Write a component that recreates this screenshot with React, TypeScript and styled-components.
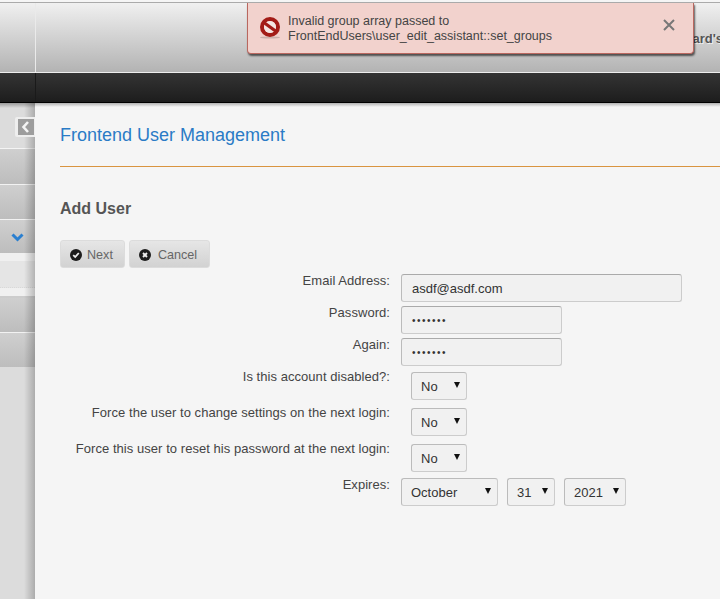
import styled, { createGlobalStyle } from "styled-components";

const GlobalStyles = createGlobalStyle`
  html, body {
    margin: 0;
    padding: 0;
    height: 100%;
    overflow: hidden;
    background: #f5f5f5;
    font-family: "Liberation Sans", Arial, sans-serif;
  }
  * {
    box-sizing: border-box;
  }
`;

const Page = styled.div`
  position: relative;
  width: 100%;
  height: 100vh;
  display: flex;
  flex-direction: column;
  overflow: hidden;
`;

const TopBar = styled.header`
  flex: none;
  height: 71px;
  margin-top: 2px;
  display: flex;
  border-top: 1px solid #aaa;
  border-bottom: 1px solid #eee;
  background: linear-gradient(#f0f0f0, #b3b3b3);
`;

const LogoCell = styled.div`
  flex: none;
  width: 36px;
  border-right: 1px solid #eaeaea;
`;

const UserCell = styled.div`
  flex: 1;
  position: relative;
  overflow: hidden;
`;

const UserName = styled.span`
  position: absolute;
  right: -3px;
  top: 28px;
  white-space: nowrap;
  font-size: 13px;
  font-weight: bold;
  color: #555;
  text-shadow: 1px 1px 0 #eee;
`;

const NavBar = styled.nav`
  flex: none;
  height: 30px;
  display: flex;
  border-bottom: 1px solid #000;
  background: linear-gradient(#343434, #1d1d1d);
`;

const NavCell = styled.div`
  flex: none;
  width: 36px;
  border-right: 1px solid #1a1a1a;
`;

const Body = styled.div`
  flex: 1;
  display: flex;
  min-height: 0;
`;

const Sidebar = styled.aside`
  position: relative;
  flex: none;
  width: 35px;
  display: flex;
  flex-direction: column;
  background: #dcdcdc;
  &::after {
    content: "";
    position: absolute;
    inset: 0;
    background: linear-gradient(90deg, transparent 24px, rgba(0, 0, 0, 0.22));
    pointer-events: none;
  }
  &::before {
    content: "";
    position: absolute;
    inset: 0 0 auto 0;
    height: 5px;
    background: linear-gradient(rgba(0, 0, 0, 0.3), transparent);
    z-index: 1;
  }
`;

const SideHead = styled.div`
  height: 46px;
  border-bottom: 1px solid #f4f4f4;
`;

const CollapseTab = styled.div`
  position: absolute;
  z-index: 2;
  left: 15px;
  top: 14px;
  width: 20px;
  height: 20px;
  padding: 2px 1px 2px 3px;
  background: #eee;
  border-radius: 2px 0 0 2px;
  svg {
    display: block;
    background: #9d9d9d;
  }
`;

const SideItem = styled.div<{ $height: number; $open?: boolean }>`
  height: ${(p) => p.$height}px;
  padding-right: 11px;
  display: flex;
  align-items: center;
  justify-content: flex-end;
  border-bottom: ${(p) => (p.$open ? "none" : "1px solid #f2f2f2")};
  background: linear-gradient(#cfcfcf, #bdbdbd);
`;

const Chevron = styled.svg`
  margin-top: 2px;
`;

const SubMenu = styled.div`
  height: 45px;
  padding-top: 8px;
  background: #f0f0f0;
  border-bottom: 2px solid #ccc;
`;

const SubItem = styled.div`
  height: 27px;
  background: #e5e5e5;
  border-bottom: 1px dotted #d8d8d8;
`;

const Main = styled.main`
  position: relative;
  flex: 1;
  padding: 0 0 0 25px;
  background: #f5f5f5;
  &::before {
    content: "";
    position: absolute;
    inset: 0 0 auto 0;
    height: 4px;
    background: linear-gradient(rgba(0, 0, 0, 0.28), transparent);
  }
`;

const Title = styled.h1`
  margin: 0;
  height: 64px;
  padding-top: 21px;
  border-bottom: 1px solid #d9943f;
  font-size: 18px;
  line-height: 22px;
  font-weight: normal;
  color: #2a7bc6;
`;

const SubTitle = styled.h2`
  margin: 33px 0 0;
  font-size: 16px;
  line-height: 18px;
  font-weight: bold;
  color: #555;
`;

const Buttons = styled.div`
  display: flex;
  gap: 4px;
  margin-top: 22px;
  height: 34px;
`;

const Button = styled.button<{ $roomy?: boolean }>`
  height: 28px;
  padding: 1px ${(p) => (p.$roomy ? "12px" : "11px")} 0 9px;
  display: flex;
  align-items: center;
  gap: ${(p) => (p.$roomy ? "7px" : "5px")};
  border: 1px solid #dcdcdc;
  border-radius: 3px;
  background: linear-gradient(#e6e6e6, #d2d2d2);
  font-family: inherit;
  font-size: 12.6px;
  color: #666;
`;

const Row = styled.div<{ $select?: boolean }>`
  display: flex;
  height: ${(p) => (p.$select ? "36px" : "32px")};
  padding-top: ${(p) => (p.$select ? "2px" : "0")};
`;

const Label = styled.label<{ $select?: boolean }>`
  flex: none;
  width: 330px;
  margin-top: ${(p) => (p.$select ? "-2px" : "0")};
  font-size: 13px;
  line-height: 14px;
  letter-spacing: 0.05px;
  text-align: right;
  color: #444;
`;

const Fields = styled.div<{ $select?: boolean }>`
  display: flex;
  gap: 9px;
  margin-left: ${(p) => (p.$select ? "21px" : "11px")};
`;

const Input = styled.input<{ $wide?: boolean }>`
  width: ${(p) => (p.$wide ? "281px" : "161px")};
  height: 28px;
  padding: 0 10px;
  border: 1px solid #ccc;
  border-top-color: #aaa;
  border-left-color: #bbb;
  border-radius: 3px;
  background: #f1f1f1;
  font-family: inherit;
  font-size: 13px;
  color: #333;
  outline: none;
  &[type="password"] {
    font-size: 10px;
    letter-spacing: 1.5px;
  }
`;

const SelectWrap = styled.div<{ $width: number }>`
  position: relative;
  width: ${(p) => p.$width}px;
  height: 28px;
  &::after {
    content: "";
    position: absolute;
    right: 7px;
    top: 10px;
    border-left: 3.5px solid transparent;
    border-right: 3.5px solid transparent;
    border-top: 6px solid #111;
    pointer-events: none;
  }
`;

const Select = styled.select`
  appearance: none;
  width: 100%;
  height: 100%;
  padding: 0 0 0 9px;
  border: 1px solid #ccc;
  border-top-color: #bbb;
  border-left-color: #bbb;
  border-radius: 3px;
  background: #f1f1f1;
  font-family: inherit;
  font-size: 13px;
  color: #333;
`;

const Flash = styled.div`
  position: absolute;
  left: 247px;
  top: 3px;
  width: 447px;
  height: 51px;
  display: flex;
  align-items: center;
  padding: 0 18px 0 12px;
  background: #f2d2cd;
  border: 1px solid #b9675f;
  border-top: none;
  border-radius: 0 0 4px 4px;
  box-shadow: 1px 2px 2px rgba(0, 0, 0, 0.6);
`;

const FlashText = styled.div`
  flex: 1;
  margin: 2px 0 0 8px;
  font-size: 12.5px;
  line-height: 15px;
  color: #444;
`;

const CloseIcon = styled.svg`
  margin-top: -6px;
`;

const Ban = () => (
  <svg width="20" height="22" viewBox="0 0 20 22">
    <ellipse cx="10" cy="20.5" rx="10" ry="1" fill="#c9b0aa" />
    <circle cx="10" cy="10" r="8" fill="none" stroke="#a31c17" strokeWidth="4" />
    <circle cx="10" cy="10" r="6" fill="#f4e6e2" />
    <path d="M4.5 6 L15.5 14" stroke="#a31c17" strokeWidth="3.2" />
  </svg>
);

const CheckCircle = () => (
  <svg width="12" height="12" viewBox="0 0 12 12">
    <circle cx="6" cy="6" r="6" fill="#1d1d1d" />
    <path d="M3.2 6.2 L5.2 8 L8.8 4" fill="none" stroke="#eee" strokeWidth="1.8" />
  </svg>
);

const CrossCircle = () => (
  <svg width="12" height="12" viewBox="0 0 12 12">
    <circle cx="6" cy="6" r="6" fill="#1d1d1d" />
    <path d="M4 4 L8 8 M8 4 L4 8" fill="none" stroke="#eee" strokeWidth="1.9" />
  </svg>
);

function SelectField({ width, value, options }: { width: number; value: string; options: string[] }) {
  return (
    <SelectWrap $width={width}>
      <Select defaultValue={value}>
        {options.map((o) => (
          <option key={o}>{o}</option>
        ))}
      </Select>
    </SelectWrap>
  );
}

const yesNoRows = [
  "Is this account disabled?:",
  "Force the user to change settings on the next login:",
  "Force this user to reset his password at the next login:",
];

function App() {
  return (
    <Page>
      <GlobalStyles />
      <TopBar>
        <LogoCell />
        <UserCell>
          <UserName>Richard's</UserName>
        </UserCell>
      </TopBar>
      <NavBar>
        <NavCell />
      </NavBar>
      <Body>
        <Sidebar>
          <CollapseTab>
            <svg width="16" height="16" viewBox="0 0 16 16">
              <path d="M10 3 L5.5 8 L10 13" fill="none" stroke="#f4f4f4" strokeWidth="2.6" />
            </svg>
          </CollapseTab>
          <SideHead />
          <SideItem $height={36} />
          <SideItem $height={35} />
          <SideItem $height={33} $open>
            <Chevron width="13" height="9" viewBox="0 0 13 9">
              <path d="M1.5 1.5 L6.5 6.5 L11.5 1.5" fill="none" stroke="#2a7fd0" strokeWidth="3" />
            </Chevron>
          </SideItem>
          <SubMenu>
            <SubItem />
          </SubMenu>
          <SideItem $height={35} />
          <SideItem $height={34} $open />
        </Sidebar>
        <Main>
          <Title>Frontend User Management</Title>
          <SubTitle>Add User</SubTitle>
          <Buttons>
            <Button>
              <CheckCircle />
              Next
            </Button>
            <Button $roomy>
              <CrossCircle />
              Cancel
            </Button>
          </Buttons>
          <Row>
            <Label>Email Address:</Label>
            <Fields>
              <Input $wide defaultValue="asdf@asdf.com" />
            </Fields>
          </Row>
          <Row>
            <Label>Password:</Label>
            <Fields>
              <Input type="password" defaultValue="asdfasd" />
            </Fields>
          </Row>
          <Row>
            <Label>Again:</Label>
            <Fields>
              <Input type="password" defaultValue="asdfasd" />
            </Fields>
          </Row>
          {yesNoRows.map((text) => (
            <Row $select key={text}>
              <Label $select>{text}</Label>
              <Fields $select>
                <SelectField width={56} value="No" options={["No", "Yes"]} />
              </Fields>
            </Row>
          ))}
          <Row>
            <Label>Expires:</Label>
            <Fields>
              <SelectField width={97} value="October" options={["September", "October", "November"]} />
              <SelectField width={48} value="31" options={["30", "31"]} />
              <SelectField width={62} value="2021" options={["2020", "2021", "2022"]} />
            </Fields>
          </Row>
        </Main>
      </Body>
      <Flash>
        <Ban />
        <FlashText>
          Invalid group array passed to
          <br />
          FrontEndUsers\user_edit_assistant::set_groups
        </FlashText>
        <CloseIcon width="12" height="12" viewBox="0 0 12 12">
          <path d="M1 1 L11 11 M11 1 L1 11" stroke="#777" strokeWidth="2" />
        </CloseIcon>
      </Flash>
    </Page>
  );
}

export default App;
